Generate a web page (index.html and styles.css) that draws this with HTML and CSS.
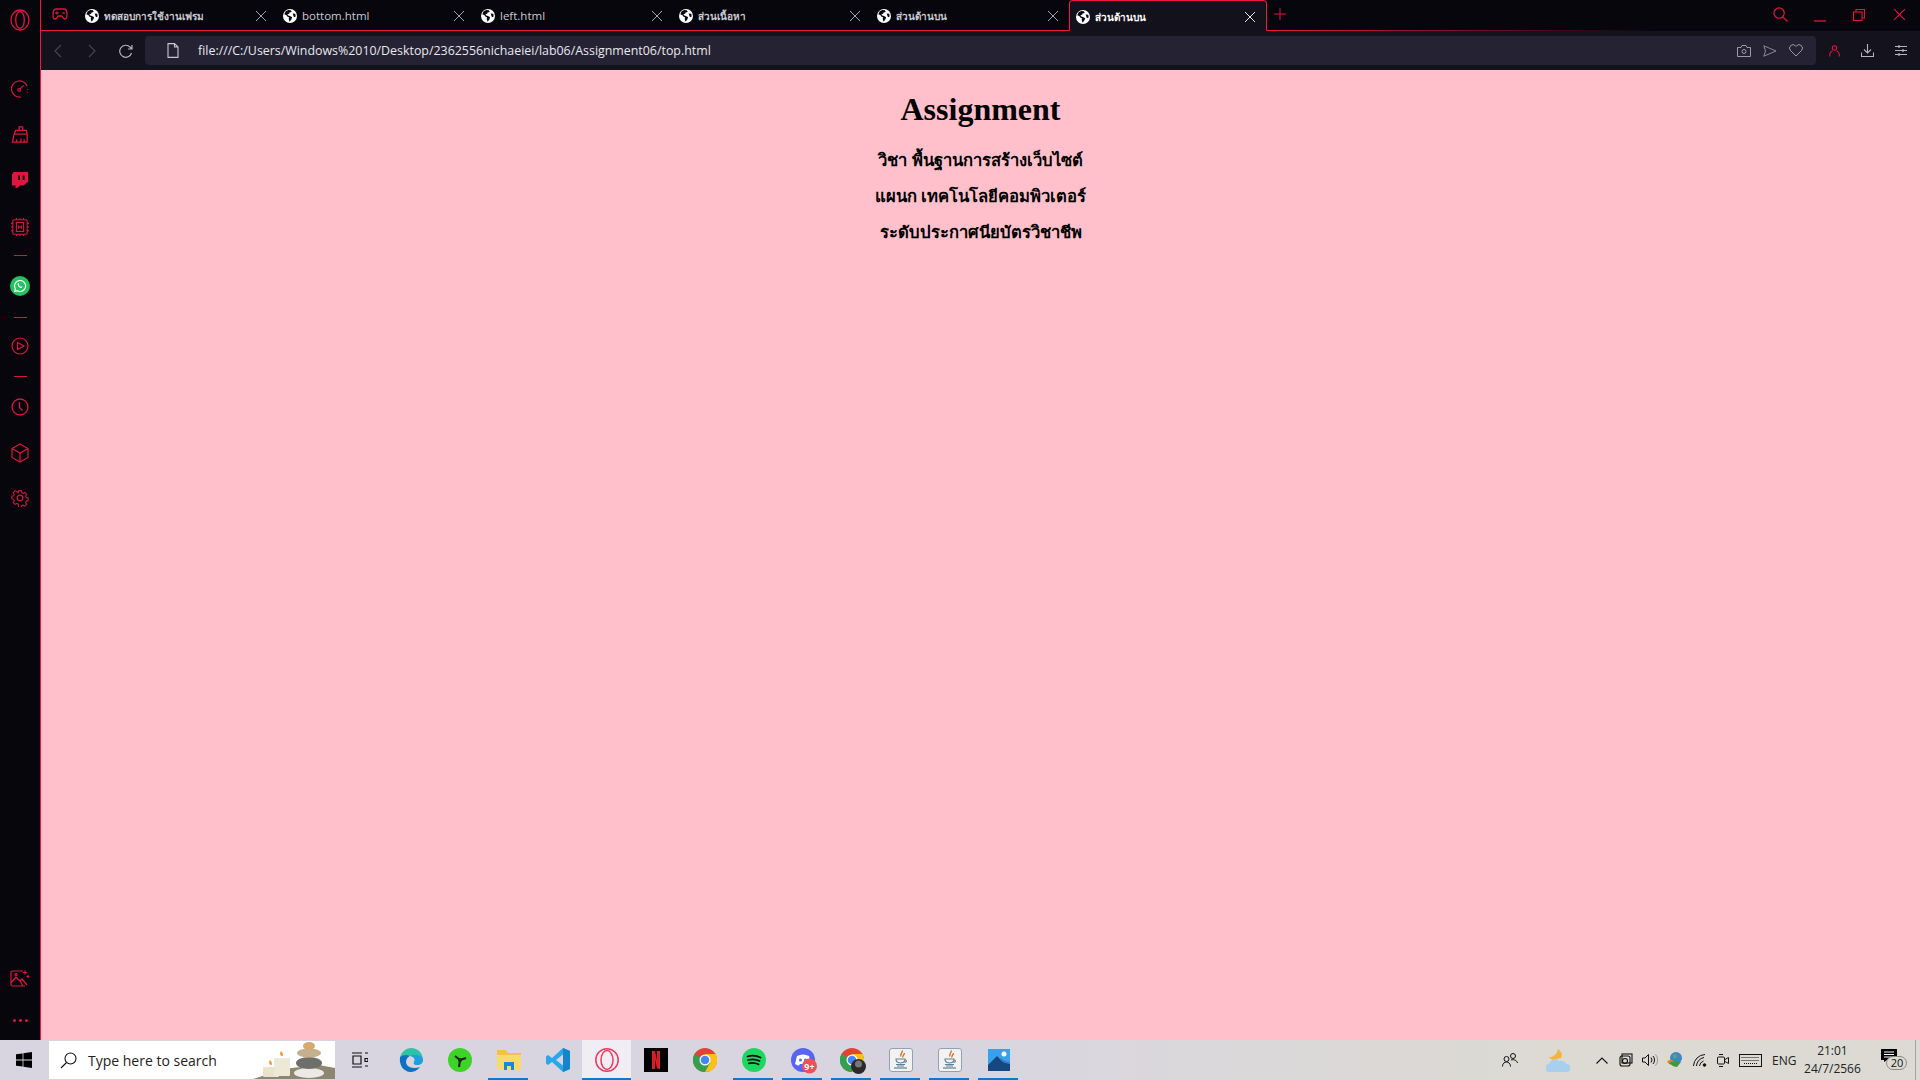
FILE: index.html
```html
<!DOCTYPE html>
<html lang="th">
<head>
    <meta charset="UTF-8">
    <title>ส่วนด้านบน</title>
    <link rel="stylesheet" href="styles.css">
</head>
<body>
<svg class="defs" width="0" height="0">
    <symbol id="globe" viewBox="0 0 16 16">
        <circle cx="8" cy="8" r="8" fill="#fff"/>
        <path d="M6 1 3 2.5 1.5 6 4 7l1.5 2 1.5.5-.5 2 1 3 2-2.5 1-2.5-2.5-1.5L6 7.5 5 6l2-.5.5-1.5 2.500-.5L9 1.500z" fill="#0b0a12"/>
        <path d="M11 5l3 .5.5 3-2 1z" fill="#0b0a12"/>
    </symbol>
    <symbol id="cross" viewBox="0 0 12 12">
        <path d="M1 1l10 10M11 1 1 11" fill="none" stroke="currentColor" stroke-width="1"/>
    </symbol>
    <symbol id="chrome" viewBox="0 0 24 24">
        <circle cx="12" cy="12" r="12" fill="#e14335"/>
        <path d="M12 12 1.6 6A12 12 0 0 0 12 24l5-8z" fill="#34a04f"/>
        <path d="M12 6h10.500A12 12 0 0 1 12 24l5-9z" fill="#fbc116"/>
        <circle cx="12" cy="12" r="5.5" fill="#fff"/>
        <circle cx="12" cy="12" r="4.3" fill="#4486f3"/>
    </symbol>
    <symbol id="java" viewBox="0 0 24 24">
        <rect x=".5" y=".5" width="23" height="23" rx="2.5" fill="#f4f2ee" stroke="#8fa1b5"/>
        <path d="M13 2.500c1.500 2-2.500 3.500-1 6M15.500 5c0 2-2.500 2.500-1.500 4.500" fill="none" stroke="#d96b28" stroke-width="1.3"/>
        <path d="M7 11h9c0 1 .1 4-4.500 4S7 12 7 11zM16 12c2 0 2 2.500-.5 2.500M7 16.500h9M8 18h7" fill="none" stroke="#5d7f9f" stroke-width="1.1"/>
        <path d="M5 20h13" stroke="#5d7f9f" stroke-width="1.2"/>
    </symbol>
</svg>

<div class="browser">
    <aside class="sidebar">
        <div class="side-logo">
            <svg width="20" height="22" viewBox="0 0 20 22" fill="none" stroke="#e8123f" stroke-width="1.3"><ellipse cx="10" cy="11" rx="9" ry="10"/><ellipse cx="10" cy="11" rx="4.3" ry="8.5"/></svg>
        </div>
        <div class="side-item">
            <svg width="18" height="18" viewBox="0 0 20 20" fill="none" stroke="#e0143f" stroke-width="1.3"><path d="M18 7A9 9 0 1 0 11 18.900"/><circle cx="9" cy="11" r="1.5"/><path d="M10 10l4-4M18.500 10v1M18 13v1"/></svg>
        </div>
        <div class="side-item">
            <svg class="side-broom" width="18" height="17" viewBox="0 0 20 19" fill="none" stroke="#e0143f" stroke-width="1.4"><path d="M9 5V1h4v4M3.500 9 5 5h12l1 4zM3.500 9 1.500 18h16.500l0-9M6 18l.5-3M11 18v-4M15 18l-.5-3"/></svg>
        </div>
        <div class="side-item">
            <svg class="side-twitch" width="18" height="18" viewBox="0 0 20 20"><path d="M3 1h16v11l-5 4h-4l-3 3H5v-3H1V4z" fill="#e0143f"/><path d="M8 5h2v5H8zM13 5h2v5h-2z" fill="#07060c"/></svg>
        </div>
        <div class="side-item">
            <svg width="18" height="18" viewBox="0 0 20 20" fill="none" stroke="#e0143f" stroke-width="1.2"><rect x="2" y="2" width="16" height="16" rx="1.5"/><rect x="6" y="5" width="8" height="10"/><path d="M8.500 8v4M11.500 8v4M8.500 10h3M0 6h2M0 10h2M0 14h2M18 6h2M18 10h2M18 14h2M6 0v2M10 0v2M14 0v2M6 18v2M10 18v2M14 18v2"/></svg>
        </div>
        <div class="side-sep side-sep-a"></div>
        <div class="side-item side-wa">
            <svg width="20" height="20" viewBox="0 0 20 20"><circle cx="10" cy="10" r="10" fill="#22c35e"/><path d="M10 4.500a5.500 5.500 0 0 0-4.700 8.300l-.7 2.600 2.700-.7A5.500 5.500 0 1 0 10 4.500z" fill="none" stroke="#fff" stroke-width="1.2"/><path d="M8 7.200c-.8.5-.7 1.700.3 3s2.300 2 3.200 1.700c.6-.2 1-.8.8-1.100l-1.100-.6-.5.5c-.7-.2-1.500-1-1.800-1.800l.5-.5-.5-1.200z" fill="#fff"/></svg>
        </div>
        <div class="side-sep side-sep-b"></div>
        <div class="side-item">
            <svg width="18" height="18" viewBox="0 0 18 18" fill="none" stroke="#e0143f" stroke-width="1.2"><circle cx="9" cy="9" r="8"/><path d="M6.500 5.500 13 9l-6.500 3.500z"/></svg>
        </div>
        <div class="side-sep side-sep-c"></div>
        <div class="side-item">
            <svg width="18" height="18" viewBox="0 0 18 18" fill="none" stroke="#e0143f" stroke-width="1.3"><circle cx="9" cy="9" r="8"/><path d="M8.500 4v5.500l3 3"/></svg>
        </div>
        <div class="side-item side-box">
            <svg width="18" height="20" viewBox="0 0 18 20" fill="none" stroke="#e0143f" stroke-width="1.2"><path d="M9 1 17 5.500V14.500L9 19 1 14.500V5.500zM1 5.500 9 10 17 5.500M9 10v9"/></svg>
        </div>
        <div class="side-item side-box">
            <svg width="18" height="18" viewBox="0 0 18 18" fill="none" stroke="#e0143f" stroke-width="1.2"><circle cx="9" cy="9" r="2.8"/><path d="M7.500 1h3l.5 2.200 1.500.7 2-1.100 2 2.100-1.200 1.900.7 1.600 2 .6v3l-2 .5-.7 1.600 1.100 2-2 2-2-1.100-1.500.7-.5 2.200h-3L7 15.700l-1.500-.7-2 1.100-2-2 1.100-2-.7-1.600-1.900-.5v-3l2-.6.6-1.600-1.100-1.900 2-2.100 2 1.100L7 3.200z" transform="translate(.9 .9) scale(.9)"/></svg>
        </div>
        <div class="side-bottom">
            <svg width="20" height="17" viewBox="0 0 20 17" fill="none" stroke="#e0143f" stroke-width="1.2"><path d="M13 1H2.500A1.500 1.500 0 0 0 1 2.500v12A1.500 1.500 0 0 0 2.500 16H15M1 13l5-6 4 4 3 5M10 11l2-2 5 6"/><circle cx="6" cy="4.500" r="1"/><path d="M15 .5v4M13 2.500h4M18 5v3M16.500 6.500h3"/></svg>
            <div class="side-dots"><span></span><span></span><span></span></div>
        </div>
    </aside>

    <div class="main">
        <div class="tabstrip">
            <div class="tab-game">
                <svg width="16" height="12" viewBox="0 0 16 12" fill="none" stroke="#e0143f" stroke-width="1.3"><path d="M4 1h8c2 0 3 2 3 5s0 5-2 5-2.500-3-3.500-3h-3C5.500 8 5 11 3 11S1 9 1 6s1-5 3-5z"/><path d="M3.500 5h3M5 3.500v3M10.500 5h2"/></svg>
            </div>
            <div class="tab">
                <svg class="tab-globe"><use href="#globe"/></svg>
                <span class="tab-title tab-thai">ทดสอบการใช้งานเฟรม</span>
                <svg class="tab-close"><use href="#cross"/></svg>
            </div>
            <div class="tab">
                <svg class="tab-globe"><use href="#globe"/></svg>
                <span class="tab-title">bottom.html</span>
                <svg class="tab-close"><use href="#cross"/></svg>
            </div>
            <div class="tab">
                <svg class="tab-globe"><use href="#globe"/></svg>
                <span class="tab-title">left.html</span>
                <svg class="tab-close"><use href="#cross"/></svg>
            </div>
            <div class="tab">
                <svg class="tab-globe"><use href="#globe"/></svg>
                <span class="tab-title tab-thai">ส่วนเนื้อหา</span>
                <svg class="tab-close"><use href="#cross"/></svg>
            </div>
            <div class="tab">
                <svg class="tab-globe"><use href="#globe"/></svg>
                <span class="tab-title tab-thai">ส่วนด้านบน</span>
                <svg class="tab-close"><use href="#cross"/></svg>
            </div>
            <div class="tab tab-active">
                <svg class="tab-globe"><use href="#globe"/></svg>
                <span class="tab-title tab-thai">ส่วนด้านบน</span>
                <svg class="tab-close"><use href="#cross"/></svg>
            </div>
            <div class="tab-rest">
                <svg class="tab-plus" width="12" height="12" viewBox="0 0 12 12"><path d="M6 0v12M0 6h12" stroke="#e0143f" stroke-width="1"/></svg>
                <div class="win-btns">
                    <svg class="win-search" width="15" height="15" viewBox="0 0 16 16" fill="none" stroke="#e8123f" stroke-width="1.3"><circle cx="6.500" cy="6.500" r="5.500"/><path d="M10.500 10.500 15.500 15.500"/></svg>
                    <svg class="win-min" width="12" height="12" viewBox="0 0 12 12"><path d="M0 11h12" stroke="#e8123f" stroke-width="1.3"/></svg>
                    <svg class="win-restore" width="12" height="12" viewBox="0 0 12 12" fill="none" stroke="#e8123f" stroke-width="1.1"><rect x=".5" y="3" width="8.500" height="8.500"/><path d="M3 3V.5h8.500V9H9"/></svg>
                    <svg class="win-close" width="13" height="13"><use href="#cross"/></svg>
                </div>
            </div>
        </div>

        <div class="toolbar">
            <svg class="nav-back" width="8" height="14" viewBox="0 0 8 14" fill="none" stroke="#45434f" stroke-width="1.2"><path d="M7 1 1 7l6 6"/></svg>
            <svg class="nav-forward" width="8" height="14" viewBox="0 0 8 14" fill="none" stroke="#45434f" stroke-width="1.2"><path d="M1 1l6 6-6 6"/></svg>
            <svg class="nav-reload" width="14" height="14" viewBox="0 0 14 14" fill="none" stroke="#b5b4bd" stroke-width="1.2"><path d="M12.500 9A6 6 0 1 1 11 3l2 2M13 1v4H9"/></svg>
            <div class="address">
                <svg class="file-icon" width="12" height="15" viewBox="0 0 12 15" fill="none" stroke="#c9c8d2" stroke-width="1.1"><path d="M1 .6h6.500L11 4v10.400H1zM7.500.6V4H11"/></svg>
                <span class="url">file:///C:/Users/Windows%2010/Desktop/2362556nichaeiei/lab06/Assignment06/top.html</span>
                <svg class="addr-icon" width="14" height="12" viewBox="0 0 14 12" fill="none" stroke="#9c9aa8" stroke-width="1"><path d="M.5 2.500H4L5 .5h4l1 2h3.500v9H.5z"/><circle cx="7" cy="6.500" r="2"/></svg>
                <svg class="addr-icon" width="14" height="12" viewBox="0 0 14 12" fill="none" stroke="#8b8997" stroke-width="1"><path d="M.8 .8 13 6 .8 11.200 2.500 6z"/></svg>
                <svg class="addr-icon" width="14" height="13" viewBox="0 0 14 13" fill="none" stroke="#9c9aa8" stroke-width="1"><path d="M7 12 1.500 6.500a3.400 3.400 0 0 1 5-4.700l.5.500.5-.5a3.400 3.400 0 0 1 5 4.700z"/></svg>
            </div>
            <div class="tool-icons">
                <svg width="11" height="12" viewBox="0 0 11 12" fill="none" stroke="#e0143f" stroke-width="1.1"><circle cx="5.500" cy="3" r="2.200"/><path d="M.7 11.500V9.500c0-2 2-3.200 2.800-3.700M10.300 11.500V9.500c0-2-2-3.200-2.800-3.700"/></svg>
                <svg width="13" height="13" viewBox="0 0 13 13" fill="none" stroke="#b5b4bd" stroke-width="1.1"><path d="M6.500 0v8.500M3 5.500l3.500 3.500L10 5.500M.5 8.500v4h12v-4"/></svg>
                <svg width="12" height="11" viewBox="0 0 12 11" fill="none" stroke="#b5b4bd" stroke-width="1"><path d="M0 1.500h12M0 5.500h12M0 9.500h12"/><path d="M4 0v3M8 4v3M4 8v3" stroke-width="1.2"/></svg>
            </div>
        </div>

        <div class="page">
            <h1>Assignment</h1>
            <h3>วิชา พื้นฐานการสร้างเว็บไซต์</h3>
            <h3>แผนก เทคโนโลยีคอมพิวเตอร์</h3>
            <h3>ระดับประกาศนียบัตรวิชาชีพ</h3>
        </div>
    </div>
</div>

<footer class="taskbar">
    <svg class="start" width="16" height="16" viewBox="0 0 16 16"><path d="M0 2.300 6.600 1.400V7.600H0zM7.400 1.300 16 0V7.600H7.400zM0 8.400H6.600V14.600L0 13.700zM7.400 8.400H16V16L7.400 14.700z" fill="#000"/></svg>
    <div class="search">
        <svg class="search-icon" width="17" height="17" viewBox="0 0 17 17" fill="none" stroke="#111" stroke-width="1.1"><circle cx="10.500" cy="6.500" r="5.500"/><path d="M6.500 10.500 1 16"/></svg>
        <span class="search-text">Type here to search</span>
        <svg class="search-art" width="82" height="38" viewBox="0 0 82 38">
            <path d="M0 38 30 28 66 24 82 27V38z" fill="#8d8771"/>
            <rect x="10" y="26" width="16" height="10" rx="1" fill="#e9e3ce"/>
            <rect x="21" y="17" width="16" height="18" rx="1" fill="#eee8d6"/>
            <path d="M17 19c-2 3 0 5 1 5s2-2-1-5zM28 10c-2 3 0 5 1 5s2-2-1-5z" fill="#f09a3a"/>
            <ellipse cx="56" cy="32" rx="15" ry="5" fill="#eceae6"/>
            <ellipse cx="56" cy="22" rx="13" ry="6" fill="#6e6e6a"/>
            <ellipse cx="56" cy="12" rx="12" ry="4.500" fill="#c4b08e"/>
            <ellipse cx="56" cy="5" rx="6" ry="4" fill="#d6a96f"/>
        </svg>
    </div>
    <div class="task-view">
        <svg width="16" height="16" viewBox="0 0 16 16" fill="none" stroke="#111" stroke-width="1.2"><path d="M0 1h10M0 15h10M1 4h8v8H1zM13 1h3M13 6.500h3v3h-3zM13 14h3"/></svg>
    </div>
    <div class="task-apps">
        <div class="app">
            <svg width="24" height="24" viewBox="0 0 24 24"><path d="M1 9C3 3 8 0 12 0c7 0 12 5 12 12 0 3-3 5-6 5-2 0-4-1-3-3 1-1 1-3 0-4-3-3-10-3-14-1z" fill="#2fc3a6"/><path d="M24 12c0 3-3 5-6 5-2 0-4-1-3-3 1-1 1-3 0-4-1-1-2-2-4-2 6-3 13 0 13 4z" fill="#1d9fe0"/><path d="M11 24C4 23 0 17 1 9c2-2 7-3 10-1-4 2-5 6-3 9 2 3 8 4 13 2-2 3-6 5-10 5z" fill="#0f6fc0"/></svg>
        </div>
        <div class="app">
            <svg width="24" height="24" viewBox="0 0 24 24"><circle cx="12" cy="12" r="12" fill="#3ed327"/><path d="M12 12 7 8M12 12l6-2M12 12l-1 7" stroke="#1f2a20" stroke-width="2.2"/><circle cx="12" cy="12" r="2" fill="#1f2a20"/></svg>
        </div>
        <div class="app app-open">
            <svg width="24" height="20" viewBox="0 0 24 20"><path d="M0 0h9l2 3h13v17H0z" fill="#f3c242"/><path d="M0 5h24v15H0z" fill="#fbd96a"/><path d="M7 12h10v8h-3v-4h-4v4H7z" fill="#1c86d8"/></svg>
        </div>
        <div class="app">
            <svg width="24" height="24" viewBox="0 0 24 24"><path d="M17 0 24 3V21L17 24 6 14 2 17 0 15.500V8.500L2 7 6 10z" fill="#2aa7ea"/><path d="M17 0 24 3V21L17 24z" fill="#1485c9"/><path d="M17 6.500 10 12l7 5.500z" fill="#d9d5e0"/></svg>
        </div>
        <div class="app app-active">
            <svg width="24" height="24" viewBox="0 0 24 24" fill="none" stroke="#f0385c" stroke-width="1.5"><circle cx="12" cy="12" r="11.200"/><ellipse cx="12" cy="12" rx="6" ry="9.500"/></svg>
        </div>
        <div class="app">
            <svg width="24" height="24" viewBox="0 0 24 24"><rect width="24" height="24" fill="#000"/><path d="M8 3h3l2 9V3h3v18l-3-.5-2-9V21l-3 .3z" fill="#d81f26"/></svg>
        </div>
        <div class="app">
            <svg width="24" height="24"><use href="#chrome"/></svg>
        </div>
        <div class="app app-open">
            <svg width="24" height="24" viewBox="0 0 24 24"><circle cx="12" cy="12" r="12" fill="#1ed760"/><path d="M5.500 8.500c4-1.200 9-1 13 1M6 12c3.500-1 8-.8 11.500 1M6.800 15.300c3-.8 6.500-.6 9.700 1" fill="none" stroke="#0c0c0c" stroke-width="1.8" stroke-linecap="round"/></svg>
        </div>
        <div class="app app-open">
            <svg class="app-over" width="26" height="26" viewBox="0 0 26 26"><circle cx="12" cy="12" r="12" fill="#5865f2"/><path d="M6 8c4-2 8-2 12 0l2 8c-2 1-3 1.500-4 1.500l-1-1.500H9l-1 1.500C7 17.500 6 17 4 16z" fill="#fff"/><circle cx="9.500" cy="12" r="1.500" fill="#5865f2"/><circle cx="14.500" cy="12" r="1.500" fill="#5865f2"/><circle cx="18.500" cy="18" r="7.500" fill="#ec5156"/><text x="18.500" y="21.500" class="badge-text">9+</text></svg>
        </div>
        <div class="app app-open">
            <svg class="app-over" width="26" height="26" viewBox="0 0 26 26"><use href="#chrome" width="24" height="24"/><circle cx="18.500" cy="18.500" r="7.500" fill="#2a2a2c"/><circle cx="18.500" cy="16" r="3.500" fill="#77777a"/></svg>
        </div>
        <div class="app app-open">
            <svg width="24" height="24"><use href="#java"/></svg>
        </div>
        <div class="app app-open">
            <svg width="24" height="24"><use href="#java"/></svg>
        </div>
        <div class="app app-open">
            <svg width="22" height="22" viewBox="0 0 22 22"><rect width="22" height="22" fill="#35a3ea"/><circle cx="16" cy="5" r="2.500" fill="#fff"/><path d="M0 16 9 7l6 6 7 2v7H0z" fill="#16487f"/><path d="M9 7l6 6 7 2v-2l-5-1z" fill="#4e70c9"/></svg>
        </div>
    </div>
    <div class="tray">
        <svg class="tray-people" width="16" height="14" viewBox="0 0 16 14" fill="none" stroke="#111" stroke-width="1"><circle cx="4.500" cy="6" r="2.500"/><path d="M.5 13.500c0-3 2-4.500 4-4.500s4 1.500 4 4.500"/><circle cx="11" cy="3" r="2.500"/><path d="M9 7c3-1 6 .5 6.500 3"/></svg>
        <svg class="tray-weather" width="24" height="23" viewBox="0 0 24 23"><path d="M12 0c3 2 5 5 3 9l-8 2-5-3c4 1 9-2 10-8z" fill="#f7b23b"/><path d="M4 23a4 4 0 0 1-1-8c1-4 7-6 10-3 4-1 7 1 7 3a4 4 0 0 1 1 8z" fill="#a9cfee"/></svg>
        <svg class="tray-chevron" width="12" height="7" viewBox="0 0 12 7" fill="none" stroke="#111" stroke-width="1.1"><path d="M.5 6.500 6 1l5.500 5.500"/></svg>
        <svg class="tray-onedrive" width="14" height="14" viewBox="0 0 14 14" fill="none" stroke="#111" stroke-width="1.1"><rect x="3" y="1" width="10" height="9"/><rect x="1" y="3" width="10" height="10" rx="2"/><circle cx="6" cy="8" r="2.500"/></svg>
        <svg class="tray-sound" width="16" height="14" viewBox="0 0 16 14" fill="none" stroke="#111" stroke-width="1"><path d="M.5 5H3L6.500 1.500v11L3 9H.5zM9 4.500a4 4 0 0 1 0 5M11 3a6 6 0 0 1 0 8"/><path d="M13.500 1.500a8 8 0 0 1 0 11" stroke="#999"/></svg>
        <svg class="tray-idm" width="16" height="16" viewBox="0 0 16 16"><circle cx="9" cy="6" r="6" fill="#3d86c9"/><path d="M6 3l3-1 1 3-3 2z" fill="#5fae4a"/><path d="M0 10c2-3 6-3 7 0l3 5-4-1C4 12 2 12 0 10z" fill="#d9843a"/><path d="M2 12c2 0 3 1 4 2l4 1 4-5H7c-2-1-4 0-5 2z" fill="#3f9a3f"/></svg>
        <svg class="tray-wifi" width="14" height="13" viewBox="0 0 14 13" fill="none" stroke="#111" stroke-width="1"><path d="M.5 12A12 12 0 0 1 12 .5M3.500 12A9 9 0 0 1 11 3.500M6.500 12A6 6 0 0 1 10.500 7"/><circle cx="11.500" cy="11" r="1.300" fill="#111"/></svg>
        <svg class="tray-cam" width="12" height="15" viewBox="0 0 12 15" fill="none" stroke="#111" stroke-width="1"><rect x=".5" y="4" width="7" height="7" rx="1"/><path d="M8 6.500 11.500 4.500v6L8 8.500M2 1.500h4M2 13.500h4"/></svg>
        <svg class="tray-keys" width="23" height="13" viewBox="0 0 23 13" fill="none" stroke="#111" stroke-width="1"><rect x=".5" y=".5" width="22" height="12"/><path d="M2.500 3.500h18M2.500 6.500h18M5 9.500h13" stroke-dasharray="1 1"/></svg>
        <span class="tray-lang">ENG</span>
        <div class="clock"><span>21:01</span><span>24/7/2566</span></div>
        <div class="notif">
            <svg width="16" height="13" viewBox="0 0 16 13"><path d="M0 0h16v11H6l-3 2v-2H0z" fill="#000"/><path d="M3 3h10M3 5.500h10M3 8h7" stroke="#fff" stroke-width="1"/></svg>
            <span class="notif-count">20</span>
        </div>
        <div class="desk-line"></div>
    </div>
</footer>
</body>
</html>
```

FILE: styles.css
```css
* {
    box-sizing: border-box;
}
html, body {
    margin: 0;
    height: 1080px;
    overflow: hidden;
}
body {
    font-family: "Open Sans", "Noto Sans", sans-serif;
    background-color: #ffc0cb;
}
svg {
    display: block;
    flex: none;
}
.defs {
    position: absolute;
}
.browser {
    display: flex;
    height: 1040px;
}

/* left rail */
.sidebar {
    width: 40px;
    background-color: #07060c;
    display: flex;
    flex-direction: column;
    align-items: center;
}
.side-logo {
    height: 66px;
    padding-top: 9px;
}
.side-item {
    height: 46px;
    display: flex;
    align-items: center;
    justify-content: center;
}
.side-broom {
    margin-bottom: 2px;
}
.side-twitch {
    margin-bottom: 3px;
}
.side-wa {
    height: 50px;
}
.side-box {
    height: 45px;
}
.side-sep {
    width: 13px;
    flex: none;
    background: linear-gradient(#e0143f, #e0143f) center / 13px 1px no-repeat;
}
.side-sep-a {
    height: 10px;
    margin-bottom: 1px;
}
.side-sep-b {
    height: 12px;
}
.side-sep-c {
    height: 15px;
}
.side-bottom {
    margin-top: auto;
    height: 70px;
    display: flex;
    flex-direction: column;
    align-items: center;
}
.side-dots {
    display: flex;
    gap: 3px;
    margin-top: 32px;
}
.side-dots span {
    width: 3px;
    height: 3px;
    border-radius: 50%;
    background-color: #e0143f;
}

.main {
    flex: 1;
    display: flex;
    flex-direction: column;
    border-left: 1px solid #f0173f;
    min-width: 0;
}

/* tabs */
.tabstrip {
    height: 31px;
    display: flex;
    background-color: #07060c;
}
.tab-game {
    width: 38px;
    display: flex;
    justify-content: center;
    align-items: center;
    padding-bottom: 2px;
    border-bottom: 1px solid #f0173f;
}
.tab {
    width: 198px;
    display: flex;
    align-items: center;
    padding: 1px 10px 0 6px;
    border-bottom: 1px solid #f0173f;
    color: #c9c8d0;
}
.tab-globe {
    width: 14px;
    height: 14px;
    margin-right: 5px;
}
.tab-title {
    flex: 1;
    font-size: 11.5px;
    line-height: 16px;
    white-space: nowrap;
    overflow: hidden;
}
.tab-thai {
    font-size: 10px;
    font-weight: 700;
}
.tab-close {
    width: 12px;
    height: 12px;
    color: #a5a4ad;
}
.tab-active {
    background-color: #12111c;
    border: 1px solid #f0173f;
    border-bottom: none;
    border-radius: 4px 4px 0 0;
    color: #fff;
}
.tab-active .tab-close {
    color: #e6e6ea;
}
.tab-rest {
    flex: 1;
    display: flex;
    align-items: center;
    padding-bottom: 3px;
    border-bottom: 1px solid;
    border-image: linear-gradient(90deg, #f0173f, #f0173f00 60%) 1;
}
.tab-plus {
    margin-left: 7px;
}
.win-btns {
    margin-left: auto;
    display: flex;
    align-items: center;
}
.win-search {
    margin-top: 2px;
}
.win-min {
    margin-left: 26px;
    margin-top: 4px;
}
.win-restore {
    margin-left: 27px;
    margin-top: 2px;
}
.win-close {
    margin-left: 28px;
    margin-right: 14px;
    margin-top: 2px;
    color: #e8123f;
}

/* address row */
.toolbar {
    height: 39px;
    background-color: #13121d;
    display: flex;
    align-items: center;
}
.nav-back {
    margin-left: 13px;
}
.nav-forward {
    margin-left: 26px;
}
.nav-reload {
    margin-left: 23px;
}
.address {
    margin-left: 12px;
    width: 1671px;
    height: 29px;
    background-color: #252234;
    border-radius: 4px;
    display: flex;
    align-items: center;
    padding: 0 13px 0 22px;
}
.file-icon {
    margin-right: 19px;
}
.url {
    flex: 1;
    font-size: 12.4px;
    color: #e8e8ee;
    white-space: nowrap;
}
.addr-icon {
    margin-left: 12px;
}
.tool-icons {
    flex: 1;
    display: flex;
    align-items: center;
    justify-content: space-between;
    padding: 0 13px 0 13px;
}

/* page body */
.page {
    flex: 1;
    text-align: center;
    color: #000;
    font-family: "Liberation Serif", "Noto Sans", serif;
}
.page h1 {
    margin: 21px 0 0;
    font-size: 32px;
    line-height: 37px;
}
.page h3 {
    margin: 0;
    font-size: 16.6px;
    line-height: 36px;
}
.page h1 + h3 {
    margin-top: 15px;
}

/* windows taskbar */
.taskbar {
    height: 40px;
    background: linear-gradient(90deg, #d8d4e0, #d9d5e0 50%, #dcdad3 80%);
    display: flex;
    align-items: center;
}
.start {
    margin-left: 16px;
}
.search {
    flex: none;
    margin-left: 17px;
    width: 286px;
    height: 38px;
    background-color: #fff;
    display: flex;
    align-items: center;
    position: relative;
}
.search-icon {
    margin-left: 11px;
}
.search-text {
    margin-left: 11px;
    font-size: 14px;
    color: #222;
}
.search-art {
    position: absolute;
    right: 0;
    bottom: 0;
}
.task-view {
    flex: none;
    margin-left: 17px;
    width: 16px;
}
.task-apps {
    flex: none;
    margin-left: 18px;
    display: flex;
    height: 40px;
}
.app {
    width: 49px;
    height: 40px;
    display: flex;
    align-items: center;
    justify-content: center;
    position: relative;
}
.app-over {
    margin-left: 2px;
    margin-top: 2px;
}
.app-open::after, .app-active::after {
    content: "";
    position: absolute;
    left: 4px;
    right: 5px;
    bottom: 0;
    height: 2px;
    background-color: #0a78d4;
}
.app-active {
    background-color: #f0edf4;
}
.app-active::after {
    left: 0;
    right: 0;
}
.badge-text {
    font-size: 9px;
    font-weight: 700;
    fill: #fff;
    text-anchor: middle;
}
.tray {
    flex: 1;
    min-width: 0;
    display: flex;
    align-items: center;
    height: 40px;
    position: relative;
}
.tray-people {
    margin-left: 479px;
}
.tray-weather {
    margin-left: 28px;
}
.tray-chevron {
    margin-left: 26px;
}
.tray-onedrive {
    margin-left: 11px;
}
.tray-sound {
    margin-left: 9px;
}
.tray-idm {
    margin-left: 9px;
}
.tray-wifi {
    margin-left: 10px;
}
.tray-cam {
    margin-left: 10px;
}
.tray-keys {
    margin-left: 10px;
}
.tray-lang {
    margin-left: 10px;
    font-size: 12px;
    color: #222;
}
.clock {
    margin-left: 5px;
    width: 62px;
    display: flex;
    flex-direction: column;
    align-items: center;
    font-size: 12px;
    line-height: 18px;
    color: #222;
}
.notif {
    margin-left: 14px;
    width: 30px;
    height: 30px;
    position: relative;
}
.notif svg {
    margin: 4px 0 0 4px;
}
.notif-count {
    position: absolute;
    right: 0;
    top: 11px;
    width: 21px;
    height: 14px;
    border: 1px solid #8a8a8a;
    border-radius: 8px;
    background-color: #dcdad3;
    font-size: 11px;
    line-height: 12px;
    text-align: center;
    color: #111;
}
.desk-line {
    margin-left: auto;
    width: 1px;
    height: 40px;
    margin-right: 4px;
    background-color: #a5a39f;
}
```
